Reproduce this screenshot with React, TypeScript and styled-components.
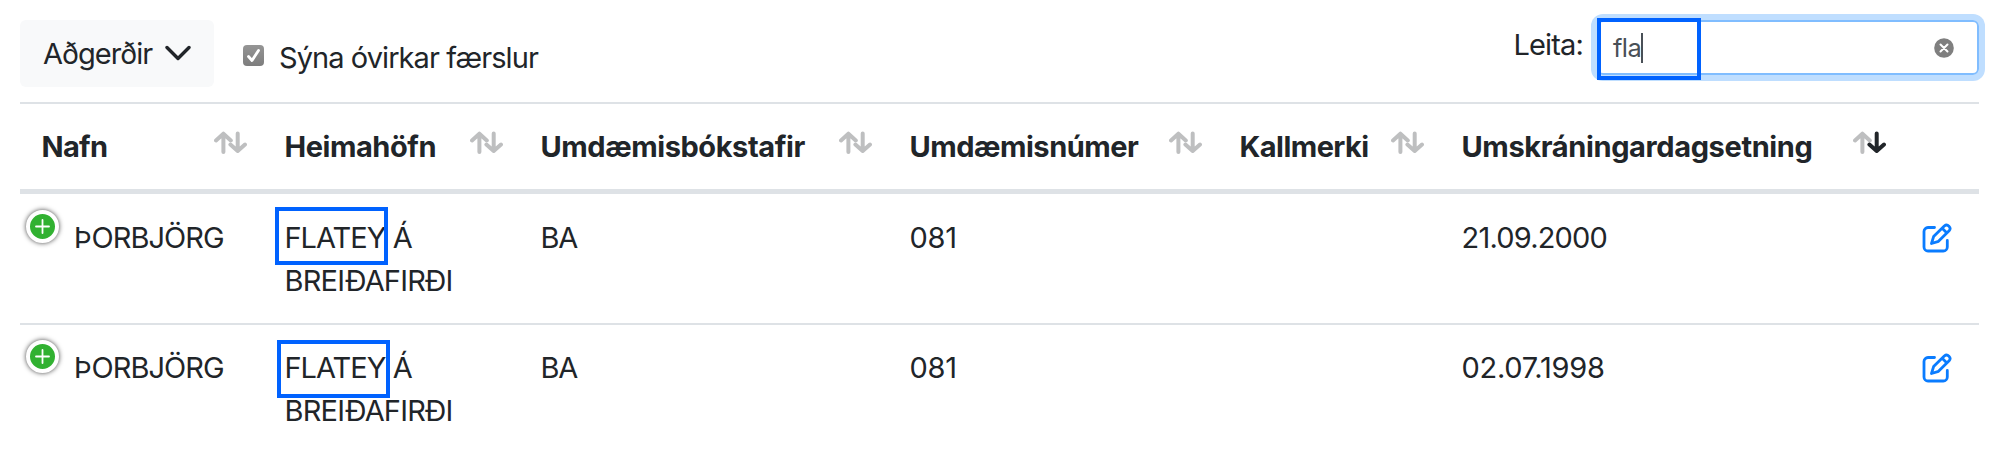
import React from "react";
import styled, { createGlobalStyle } from "styled-components";

const GlobalStyle = createGlobalStyle`
  * { box-sizing: border-box; }
  body {
    margin: 0;
    background: #fff;
    color: #212529;
    font-family: Inter, "Liberation Sans", sans-serif;
    font-size: 29px;
    line-height: 43px;
  }
`;

const Page = styled.main`
  width: 1999px;
  height: 455px;
  padding: 20px 20px 0;
  overflow: hidden;
`;

const Toolbar = styled.div`
  display: flex;
  align-items: flex-start;
  height: 82px;
`;

const ActionsButton = styled.button`
  display: flex;
  align-items: center;
  justify-content: space-between;
  width: 194px;
  height: 67px;
  padding: 0 23px 0 23px;
  border: 0;
  border-radius: 6px;
  background: #f8f9fa;
  color: inherit;
  font: inherit;
`;

const Text = styled.span<{ $spacing?: number }>`
  letter-spacing: ${(p) => p.$spacing ?? 0}px;
  white-space: nowrap;
`;

const CheckLabel = styled.label`
  display: flex;
  align-items: flex-start;
  gap: 15px;
  margin: 16px 0 0 29px;
`;

const Checkbox = styled.span`
  display: flex;
  width: 21px;
  height: 21px;
  margin-top: 9px;
  border-radius: 4px;
  background: linear-gradient(#959595, #7d7d7d);
`;

const Search = styled.label`
  display: flex;
  align-items: flex-start;
  gap: 14px;
  margin-left: auto;
`;

const SearchCaption = styled(Text)`
  margin-top: 3px;
`;

const SearchBox = styled.span`
  position: relative;
  display: flex;
  align-items: center;
  width: 382px;
  height: 55px;
  padding: 0 23px 0 14px;
  border: 2px solid #80bdff;
  border-radius: 6px;
  box-shadow: 0 0 0 6px #bfdeff;
  color: #495057;
  font-size: 25.5px;
`;

const Caret = styled.span`
  width: 2px;
  height: 30px;
  margin-right: auto;
  background: #495057;
`;

const Highlight = styled.span<{ $x: number; $y: number; $w: number; $h: number }>`
  position: absolute;
  left: ${(p) => p.$x}px;
  top: ${(p) => p.$y}px;
  width: ${(p) => p.$w}px;
  height: ${(p) => p.$h}px;
  border: 4px solid #0062ff;
`;

const Table = styled.table`
  width: 1959px;
  table-layout: fixed;
  border-collapse: separate;
  border-spacing: 0;
`;

const Col = styled.col<{ $w: number }>`
  width: ${(p) => p.$w}px;
`;

const HeadCell = styled.th`
  height: 92px;
  padding: 21px 0 21px 21.5px;
  border-top: 2px solid #dee2e6;
  border-bottom: 5px solid #dee2e6;
  text-align: left;
  font-weight: 700;
`;

const HeadContent = styled.div`
  display: flex;
  justify-content: space-between;
  height: 43px;
  padding-right: 16px;
`;

const SortIcon = styled.svg`
  flex: none;
  margin-top: 6px;
`;

const Row = styled.tr`
  & + & > td {
    border-top: 2px solid #dee2e6;
    padding-top: 21px;
  }
`;

const Cell = styled.td`
  padding: 22px 0 21px 21.5px;
  vertical-align: top;
`;

const NameContent = styled.div`
  display: flex;
  gap: 15px;
  margin-left: -15.5px;
`;

const ExpandButton = styled.span`
  display: flex;
  align-items: center;
  justify-content: center;
  width: 33px;
  height: 33px;
  margin-top: -6px;
  border: 4px solid #fff;
  border-radius: 50%;
  background: #31b131;
  box-shadow: 0 0 5px #444;
`;

const Marked = styled.span`
  position: relative;
`;

const EditIcon = styled.svg`
  display: block;
  margin: 7px 0 0 -1.5px;
`;

type Column = { label: string; width: number; spacing: number; sorted?: boolean };

const columns: Column[] = [
  { label: "Nafn", width: 243, spacing: -0.7 },
  { label: "Heimahöfn", width: 256, spacing: -0.45 },
  { label: "Umdæmisbókstafir", width: 369, spacing: -0.42 },
  { label: "Umdæmisnúmer", width: 330, spacing: -0.47 },
  { label: "Kallmerki", width: 222, spacing: -0.55 },
  { label: "Umskráningardagsetning", width: 462, spacing: -0.37, sorted: true },
];

const rows = [
  { name: "ÞORBJÖRG", port: ["FLATEY", "Á", "BREIÐAFIRÐI"], code: "BA", no: "081", date: "21.09.2000", dateSpacing: -0.8, mark: { x: -9.5, y: -13 } },
  { name: "ÞORBJÖRG", port: ["FLATEY", "Á", "BREIÐAFIRÐI"], code: "BA", no: "081", date: "02.07.1998", dateSpacing: -0.25, mark: { x: -7.5, y: -10 } },
];

const Sort = ({ sorted }: { sorted?: boolean }) => (
  <SortIcon width="33" height="23" viewBox="0 0 33 23" fill="none" strokeWidth="4" strokeLinecap="round" strokeLinejoin="round">
    <path d="M2 9.5 9.4 2.7 16.8 9.5M9.4 3v18" stroke="#bebfc0" />
    <path d="M16.4 13.5 23.7 20 31 13.5M23.7 2.5V20" stroke={sorted ? "#212529" : "#bebfc0"} />
  </SortIcon>
);

const Edit = () => (
  <EditIcon width="30" height="30" viewBox="0 0 30 30" fill="none" stroke="#0a7cff" strokeWidth="2.8" strokeLinecap="round" strokeLinejoin="round">
    <path d="M12.5 4.5H6a4 4 0 0 0-4 4V24a4 4 0 0 0 4 4h15.3a4 4 0 0 0 4-4v-6.5" />
    <path d="M22.3 3a3.4 3.4 0 0 1 4.8 4.8L16.5 18.3 9.5 20.5 11.6 13.6ZM20.2 5.2 24.9 9.9" />
  </EditIcon>
);

export default function App() {
  return (
    <>
      <GlobalStyle />
      <Page>
        <Toolbar>
          <ActionsButton>
            <Text $spacing={-0.95}>Aðgerðir</Text>
            <svg width="26" height="17" viewBox="0 0 26 17" fill="none" stroke="#212529" strokeWidth="3.4" strokeLinecap="round" strokeLinejoin="round">
              <path d="M2 2.5 13 13.5 24 2.5" />
            </svg>
          </ActionsButton>
          <CheckLabel>
            <Checkbox>
              <svg width="21" height="21" viewBox="0 0 21 21" fill="none" stroke="#fff" strokeWidth="2.8" strokeLinecap="round" strokeLinejoin="round">
                <path d="M5.5 11.5 9 15.5 15.5 5.5" />
              </svg>
            </Checkbox>
            <Text $spacing={-0.93}>Sýna óvirkar færslur</Text>
          </CheckLabel>
          <Search>
            <SearchCaption $spacing={-0.85}>Leita:</SearchCaption>
            <SearchBox>
              <Text $spacing={-0.6}>fla</Text>
              <Caret />
              <svg width="20" height="20" viewBox="0 0 20 20">
                <circle cx="10" cy="10" r="9.8" fill="#7f7f7f" />
                <path d="m6.5 6.5 7 7m0-7-7 7" stroke="#fff" strokeWidth="2" strokeLinecap="round" />
              </svg>
              <Highlight $x={-2} $y={-4} $w={104} $h={62} />
            </SearchBox>
          </Search>
        </Toolbar>
        <Table>
          <colgroup>
            {columns.map((c) => <Col key={c.label} $w={c.width} />)}
            <Col $w={77} />
          </colgroup>
          <thead>
            <tr>
              {columns.map((c) => (
                <HeadCell key={c.label}>
                  <HeadContent>
                    <Text $spacing={c.spacing}>{c.label}</Text>
                    <Sort sorted={c.sorted} />
                  </HeadContent>
                </HeadCell>
              ))}
              <HeadCell />
            </tr>
          </thead>
          <tbody>
            {rows.map((r) => (
              <Row key={r.date}>
                <Cell>
                  <NameContent>
                    <ExpandButton>
                      <svg width="15" height="15" viewBox="0 0 15 15" stroke="#fff" strokeWidth="1.8" strokeLinecap="round">
                        <path d="M7.5 1v13M1 7.5h13" />
                      </svg>
                    </ExpandButton>
                    <Text $spacing={-0.95}>{r.name}</Text>
                  </NameContent>
                </Cell>
                <Cell>
                  <Marked>
                    <Text $spacing={-1}>{r.port[0]}</Text>
                    <Highlight $x={r.mark.x} $y={r.mark.y} $w={113} $h={58} />
                  </Marked>
                  <Text $spacing={-0.9}> {r.port[1]}</Text>
                  <br />
                  <Text $spacing={-0.8}>{r.port[2]}</Text>
                </Cell>
                <Cell><Text $spacing={-1.3}>{r.code}</Text></Cell>
                <Cell><Text $spacing={-0.3}>{r.no}</Text></Cell>
                <Cell />
                <Cell><Text $spacing={r.dateSpacing}>{r.date}</Text></Cell>
                <Cell><Edit /></Cell>
              </Row>
            ))}
          </tbody>
        </Table>
      </Page>
    </>
  );
}
